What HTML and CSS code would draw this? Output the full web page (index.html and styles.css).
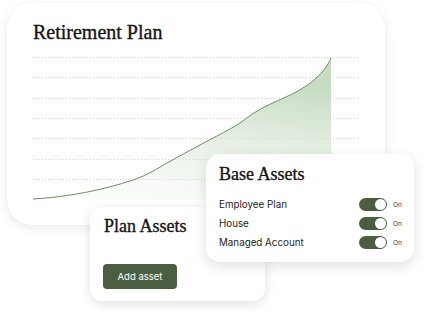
FILE: index.html
```html
<!DOCTYPE html>
<html>
<head>
<meta charset="utf-8">
<link rel="stylesheet" href="styles.css">
</head>
<body>
<div class="scene">
  <section class="card main-card">
    <h1 class="title title-lg">Retirement Plan</h1>
    <svg class="chart" width="326" height="146" viewBox="0 0 326 146">
      <defs>
        <linearGradient id="fillGrad" x1="0.3" y1="0" x2="0" y2="1">
          <stop offset="0" stop-color="#c6dbc2" stop-opacity="1"/>
          <stop offset="1" stop-color="#eaf1e8" stop-opacity="0.1"/>
        </linearGradient>
      </defs>
      <g class="grid">
        <line x1="0" y1="1.5" x2="326" y2="1.5"/>
        <line x1="0" y1="21.5" x2="326" y2="21.5"/>
        <line x1="0" y1="42.5" x2="326" y2="42.5"/>
        <line x1="0" y1="62.5" x2="326" y2="62.5"/>
        <line x1="0" y1="82.5" x2="326" y2="82.5"/>
        <line x1="0" y1="103.5" x2="326" y2="103.5"/>
        <line x1="0" y1="123.5" x2="326" y2="123.5"/>
      </g>
      <path class="area" d="M0,143 C35,141 70,134 100,124 C115,119 125,112 134,107 C150,98 165,90 180,82 C190,77 197,73 204,69 C212,64 218,58 226,54 C240,46 252,42 263,36 C272,31 278,27 283,22 C290,16 295,9 298,2 L298,144 L0,144 Z"/>
      <path class="line" d="M0,143 C35,141 70,134 100,124 C115,119 125,112 134,107 C150,98 165,90 180,82 C190,77 197,73 204,69 C212,64 218,58 226,54 C240,46 252,42 263,36 C272,31 278,27 283,22 C290,16 295,9 298,2"/>
    </svg>
  </section>

  <section class="card plan-card">
    <h2 class="title">Plan Assets</h2>
    <button class="btn">Add asset</button>
  </section>

  <section class="card base-card">
    <h2 class="title">Base Assets</h2>
    <ul class="rows">
      <li class="row"><span class="label">Employee Plan</span><span class="ctrl"><span class="toggle"><span class="knob"></span></span><span class="on">On</span></span></li>
      <li class="row"><span class="label">House</span><span class="ctrl"><span class="toggle"><span class="knob"></span></span><span class="on">On</span></span></li>
      <li class="row"><span class="label">Managed Account</span><span class="ctrl"><span class="toggle"><span class="knob"></span></span><span class="on">On</span></span></li>
    </ul>
  </section>
</div>
</body>
</html>
```

FILE: styles.css
```css
html, body {
  margin: 0;
  padding: 0;
  background: #ffffff;
}
.scene {
  position: relative;
  width: 432px;
  height: 319px;
  overflow: hidden;
}
.card {
  background: #ffffff;
  box-sizing: border-box;
}
.main-card {
  margin: 3px 0 0 7px;
  width: 378px;
  height: 222px;
  border-radius: 26px;
  padding: 17px 0 0 26px;
  box-shadow: 0 3px 12px rgba(0, 0, 0, 0.09);
}
.title {
  margin: 0;
  font-family: "Liberation Serif", "Times New Roman", serif;
  font-weight: normal;
  font-size: 18px;
  line-height: 22px;
  color: #151515;
  -webkit-text-stroke: 0.35px #151515;
}
.title-lg {
  font-size: 20px;
  line-height: 24px;
}
.chart {
  display: block;
  margin-top: 12px;
}
.grid line {
  stroke: #d4d4d4;
  stroke-width: 1;
  stroke-dasharray: 1 2;
}
.area {
  fill: url(#fillGrad);
}
.line {
  fill: none;
  stroke: #6f8c69;
  stroke-width: 1;
}
.plan-card {
  position: absolute;
  left: 90px;
  top: 207px;
  width: 175px;
  height: 94px;
  border-radius: 12px;
  padding: 8px 0 0 14px;
  box-shadow: 0 3px 12px rgba(0, 0, 0, 0.12);
}
.btn {
  display: block;
  margin: 27px 0 0 -1px;
  width: 74px;
  height: 25px;
  border: none;
  border-radius: 4px;
  background: #4b5e41;
  color: #ffffff;
  font-family: "Inter", "Liberation Sans", sans-serif;
  font-size: 9.5px;
  padding: 0;
}
.base-card {
  position: absolute;
  left: 206px;
  top: 154px;
  width: 208px;
  height: 108px;
  border-radius: 14px;
  padding: 9px 0 0 13px;
  box-shadow: 0 4px 14px rgba(0, 0, 0, 0.13);
}
.rows {
  list-style: none;
  margin: 10px 0 0 0;
  padding: 0 12px 0 0;
}
.row {
  display: flex;
  justify-content: space-between;
  align-items: center;
  height: 19px;
}
.label {
  font-family: "Inter", "Liberation Sans", sans-serif;
  font-size: 9.8px;
  color: #1e1e1e;
}
.ctrl {
  display: flex;
  align-items: center;
  gap: 6px;
}
.toggle {
  display: flex;
  justify-content: flex-end;
  align-items: center;
  box-sizing: border-box;
  width: 28px;
  height: 13px;
  border-radius: 7px;
  background: #4b5e41;
  padding: 1px;
}
.knob {
  width: 11px;
  height: 11px;
  border-radius: 50%;
  background: #ffffff;
}
.on {
  width: 9px;
  font-family: "Inter", "Liberation Sans", sans-serif;
  font-size: 6.5px;
  color: #333333;
}
```
